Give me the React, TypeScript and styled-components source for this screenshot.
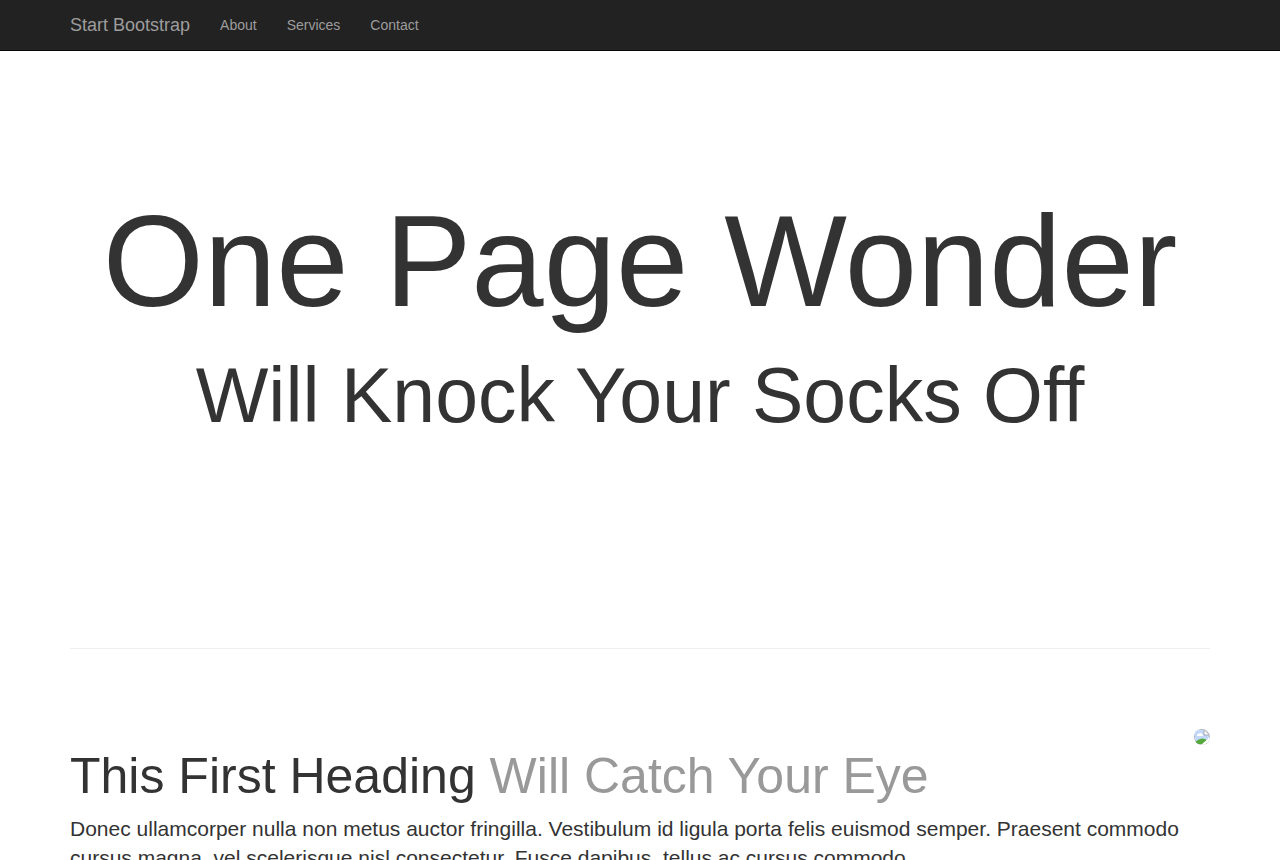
import React from "react";
import styled, { createGlobalStyle } from "styled-components";

const GlobalStyle = createGlobalStyle`
  *, *::before, *::after { box-sizing: border-box; }
  body {
    margin: 0;
    padding-top: 50px;
    background: #fff;
    color: #333;
    font-family: "Liberation Sans", Arial, sans-serif;
    font-size: 14px;
    line-height: 20px;
  }
`;

const Container = styled.div`
  width: 100%;
  max-width: 1170px;
  margin: 0 auto;
  padding: 0 15px;
`;

const Navbar = styled.nav`
  position: fixed;
  top: 0;
  left: 0;
  right: 0;
  z-index: 10;
  background: #222;
  border-bottom: 1px solid #080808;
`;

const NavInner = styled(Container)`
  display: flex;
  min-height: 50px;
`;

const Brand = styled.a`
  padding: 15px 15px 15px 0;
  font-size: 18px;
  line-height: 20px;
  color: #9d9d9d;
  text-decoration: none;
  &:hover { color: #fff; }
`;

const NavList = styled.ul`
  display: flex;
  margin: 0;
  padding: 0;
  list-style: none;
`;

const NavLink = styled.a`
  display: block;
  padding: 15px;
  color: #9d9d9d;
  text-decoration: none;
  &:hover { color: #fff; }
`;

const Hero = styled.header`
  padding: 140px 0 210px;
  text-align: center;
`;

const Title = styled.h1`
  margin: 0;
  font-size: 130px;
  font-weight: 500;
  line-height: 143px;
`;

const Tagline = styled.h2`
  margin: 20px 0 0;
  font-size: 77px;
  font-weight: 500;
  line-height: 85px;
`;

const Divider = styled.hr`
  margin: 0 0 80px;
  border: 0;
  border-top: 1px solid #eee;
`;

const Feature = styled.section`
  display: flow-root;
`;

const FeaturePicture = styled.svg`
  float: right;
  width: 16px;
  height: 16px;
  border-radius: 50%;
`;

const FeatureHeading = styled.h2`
  margin: 20px 0 10px;
  font-size: 50px;
  font-weight: 500;
  line-height: 55px;
`;

const Muted = styled.span`
  color: #999;
`;

const Lead = styled.p`
  margin: 0 0 20px;
  font-size: 21px;
  font-weight: 300;
  line-height: 29px;
`;

const links = ["About", "Services", "Contact"];

export default function App() {
  return (
    <>
      <GlobalStyle />
      <Navbar>
        <NavInner>
          <Brand href="#">Start Bootstrap</Brand>
          <NavList>
            {links.map((name) => (
              <li key={name}>
                <NavLink href={`#${name.toLowerCase()}`}>{name}</NavLink>
              </li>
            ))}
          </NavList>
        </NavInner>
      </Navbar>
      <Hero>
        <Container>
          <Title>One Page Wonder</Title>
          <Tagline>Will Knock Your Socks Off</Tagline>
        </Container>
      </Hero>
      <Container as="main">
        <Divider />
        <Feature id="about">
          <FeaturePicture viewBox="0 0 16 16" aria-hidden="true">
            <path d="M0 0H11L16 5V16H0Z" fill="#b4b9c2" />
            <path d="M1 1H10V6H15V15H1Z" fill="#c3d7fa" />
            <path d="M10 1L15 6H10Z" fill="#fff" />
            <path d="M10 1V6H15" fill="none" stroke="#a5a9b0" />
            <path d="M3 7V5.5q1-1 2-.5q1-2 3 0q1 .5 1 2z" fill="#fff" />
            <path d="M1 15V13Q4 10 8 9.5Q11 9.5 13 11V15Z" fill="#55a83c" />
            <path d="M7 16L16 8V11L11 16Z" fill="#fff" />
          </FeaturePicture>
          <FeatureHeading>
            This First Heading <Muted>Will Catch Your Eye</Muted>
          </FeatureHeading>
          <Lead>
            Donec ullamcorper nulla non metus auctor fringilla. Vestibulum id ligula porta felis euismod semper. Praesent commodo cursus magna, vel scelerisque nisl consectetur. Fusce dapibus, tellus ac cursus commodo.
          </Lead>
        </Feature>
      </Container>
    </>
  );
}
